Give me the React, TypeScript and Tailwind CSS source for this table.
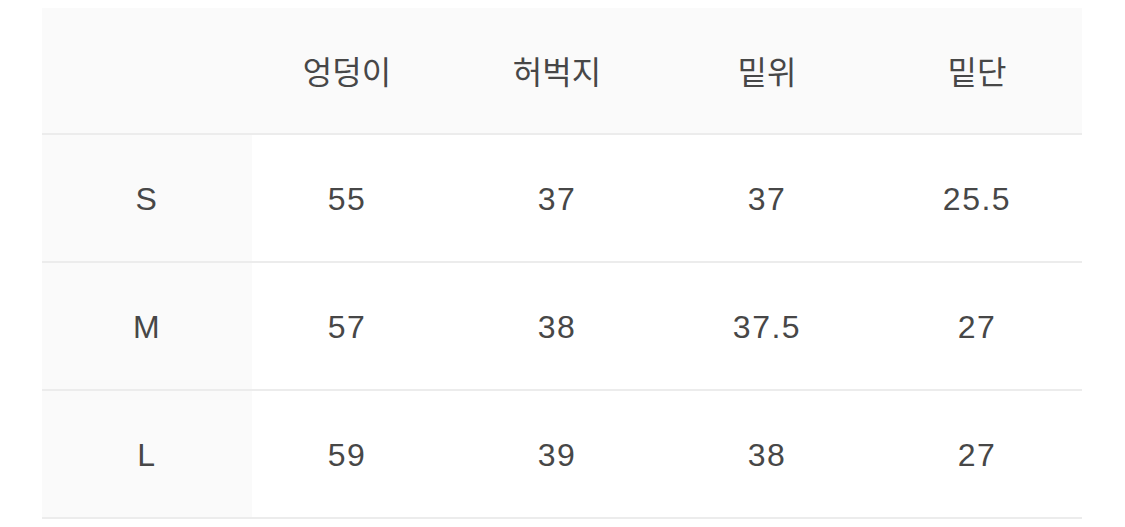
import React from "react";

const headers = ["엉덩이", "허벅지", "밑위", "밑단"];
const rows = [
  ["S", "55", "37", "37", "25.5"],
  ["M", "57", "38", "37.5", "27"],
  ["L", "59", "39", "38", "27"],
];

const font = {
  fontFamily: '"Liberation Sans", "Noto Sans CJK KR", sans-serif',
};

export default function App() {
  return (
    <div className="w-[1125px] h-[527px] bg-white pt-[8px] pl-[42px]" style={font}>
      <div className="w-[1040px] text-[32px] text-[#474747] leading-none">
        <div className="grid grid-cols-[210px_210px_210px_210px_200px] border-b-2 border-[#ececec] bg-[#fafafa]">
          <div className="h-[125px]" />
          {headers.map((h, i) => (
            <div
              key={h}
              className={`flex items-center justify-center h-[125px] pb-[2px] ${i === 3 ? "pr-[10px]" : "pr-[20px]"}`}
            >
              <span style={{ fontFamily: '"Noto Sans CJK KR", sans-serif' }}>{h}</span>
            </div>
          ))}
        </div>
        {rows.map((r) => (
          <div
            key={r[0]}
            className="grid grid-cols-[210px_210px_210px_210px_200px] border-b-2 border-[#ececec] h-[128px]"
          >
            {r.map((v, i) => (
              <div
                key={i}
                className={`flex items-center justify-center h-[126px] pt-[1px] tracking-[1.5px] ${
                  i === 0 ? "bg-[#fafafa]" : i === 4 ? "pr-[10px]" : "pr-[20px]"
                }`}
              >
                {v}
              </div>
            ))}
          </div>
        ))}
      </div>
    </div>
  );
}
